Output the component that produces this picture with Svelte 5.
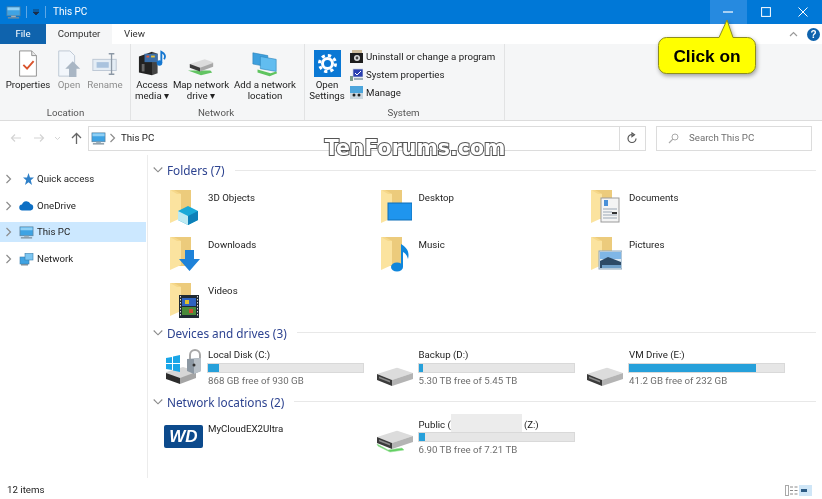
<script>
  const folders = [
    { name: '3D Objects', o: 'cube' }, { name: 'Desktop', o: 'desk' }, { name: 'Documents', o: 'doc' },
    { name: 'Downloads', o: 'down' }, { name: 'Music', o: 'music' }, { name: 'Pictures', o: 'pic' },
    { name: 'Videos', o: 'video' }
  ];
  const drives = [
    { name: 'Local Disk (C:)', free: '868 GB free of 930 GB', pct: 7, icon: 'win' },
    { name: 'Backup (D:)', free: '5.30 TB free of 5.45 TB', pct: 3, icon: 'hdd' },
    { name: 'VM Drive (E:)', free: '41.2 GB free of 232 GB', pct: 82, icon: 'hdd' }
  ];
  const nav = [
    { name: 'Quick access', icon: 'star' }, { name: 'OneDrive', icon: 'cloud' },
    { name: 'This PC', icon: 'pc', sel: true }, { name: 'Network', icon: 'net' }
  ];
</script>

{#snippet chev()}
  <svg class="chev" width="7" height="10" viewBox="0 0 7 10"><path d="M1.500 1l4 4-4 4" fill="none" stroke="#8c8c8c" stroke-width="1.200"/></svg>
{/snippet}
{#snippet down()}
  <svg width="10" height="8" viewBox="0 0 10 8"><path d="M.7 1.500l4.300 4.300 4.300-4.300" fill="none" stroke="#8a8a8a" stroke-width="1.100"/></svg>
{/snippet}
{#snippet pc(w)}
  <svg width={w} height={w} viewBox="0 0 16 16"><rect x="1" y="2" width="14" height="9.500" fill="#3fa3e3" stroke="#5f7f96" stroke-width=".7"/><rect x="1.600" y="2.600" width="12.800" height="3" fill="#8fd0f5"/><rect x="5.500" y="11.500" width="5" height="1.500" fill="#9fb0bb"/><rect x="2" y="13" width="12" height="1.400" fill="#7d8f9c"/></svg>
{/snippet}
{#snippet hdd(green)}
  <svg width="38" height="30" viewBox="0 0 38 30">
    {#if green}<path d="M1 20l11 6 14-2 2 2-14 2-12-6z" fill="#5fcf5f" stroke="#9adf9a" stroke-width=".6"/>{/if}
    <path d="M1 13L20 7q1-.3 2 0l15 5-21 7z" fill="#dcdcdc"/>
    <path d="M1 13l15 6v6L1 19z" fill="#3a3a3a"/>
    <path d="M16 19l21-7v6l-21 7z" fill="#b4b4b4"/>
    <path d="M3 15.500l11 4.300v1.800L3 17.300z" fill="#8a8a8a"/>
  </svg>
{/snippet}

<div class="win">
  <header class="title">
    <div class="qa">
      {@render pc(15)}
      <i class="sep"></i>
      <svg width="8" height="7" viewBox="0 0 8 7"><path d="M1 1h6M1 3l3 3 3-3z" stroke="#1b2d4a" fill="#1b2d4a" stroke-width=".8"/></svg>
      <i class="sep"></i>
      <span>This PC</span>
    </div>
    <div class="wbtns">
      <button class="hot"><svg width="10" height="10" viewBox="0 0 10 10"><path d="M0 5h10" stroke="#fff" stroke-width="1.200"/></svg></button>
      <button><svg width="10" height="10" viewBox="0 0 10 10"><rect x=".6" y=".6" width="8.800" height="8.800" fill="none" stroke="#fff" stroke-width="1"/></svg></button>
      <button><svg width="10" height="10" viewBox="0 0 10 10"><path d="M.5.5l9 9M9.500.5l-9 9" stroke="#fff" stroke-width="1"/></svg></button>
    </div>
  </header>

  <div class="tabs">
    <div class="tab file">File</div>
    <div class="tab cur">Computer</div>
    <div class="tab">View</div>
    <div class="tabr">
      <svg width="9" height="6" viewBox="0 0 9 6"><path d="M1 5l3.500-3.500L8 5" fill="none" stroke="#9a9a9a" stroke-width="1.200"/></svg>
      <span class="help">?</span>
    </div>
  </div>

  <div class="ribbon">
    <section class="grp loc">
      <div class="tools">
        <div class="tool w46">
          <svg width="26" height="30" viewBox="0 0 26 30"><path d="M4 1h13l5 5v22H4z" fill="#fff" stroke="#8d8d8d"/><path d="M17 1v5h5" fill="#e8e8e8" stroke="#8d8d8d"/><path d="M8 16l4 4 7-8" fill="none" stroke="#d9532c" stroke-width="2"/></svg>
          <span>Properties</span>
        </div>
        <div class="tool w34 dim">
          <svg width="28" height="30" viewBox="0 0 28 30"><path d="M3 1h12l5 5v22H3z" fill="#f2f6fb" stroke="#bcc7d4"/><path d="M18 12l8 8h-4v9h-8v-9h-4z" fill="#a9b6c4"/></svg>
          <span>Open</span>
        </div>
        <div class="tool w36 dim">
          <svg width="28" height="30" viewBox="0 0 28 30"><rect x="1" y="10" width="25" height="12" fill="#e4edf5" stroke="#bcc7d4"/><rect x="5" y="13" width="13" height="6" fill="#a9c3de"/><path d="M18 4h6M21 4v22M18 26h6" fill="none" stroke="#8c98a5" stroke-width="1.400"/></svg>
          <span>Rename</span>
        </div>
      </div>
      <footer>Location</footer>
    </section>
    <section class="grp netg">
      <div class="tools">
        <div class="tool w40">
          <svg width="30" height="30" viewBox="0 0 30 30"><path d="M1 7l14-5v25L1 24z" fill="#222"/><path d="M15 2l6 2v21l-6 2z" fill="#444"/><rect x="7" y="4" width="14" height="9" fill="#3a6ea8"/><rect x="9" y="6" width="3" height="2" fill="#e05a3a"/><rect x="14" y="6" width="4" height="2" fill="#e8c33a"/><circle cx="23" cy="14" r="3" fill="#1577d0"/><path d="M25 14V2c4 2 5 5 3 8" fill="none" stroke="#1577d0" stroke-width="2"/><rect x="4" y="15" width="3" height="8" fill="#666"/></svg>
          <span>Access<br/>media ▾</span>
        </div>
        <div class="tool w56">
          <svg width="30" height="30" viewBox="0 0 30 30"><path d="M1 22l14 5 12-3-2-2z" fill="#62c462"/><path d="M3 15l16-5 9 3v4L14 22 3 18z" fill="#dcdcdc"/><path d="M3 15l11 4v4L3 19z" fill="#3a3a3a"/><path d="M14 19l14-5v4l-14 5z" fill="#a8a8a8"/></svg>
          <span>Map network<br/>drive ▾</span>
        </div>
        <div class="tool w62">
          <svg width="30" height="30" viewBox="0 0 30 30"><path d="M2 3l16 3v12L2 15z" fill="#3ea0de" stroke="#2a7fb5" stroke-width=".6"/><path d="M10 7l17 3v13L10 20z" fill="#62bdf0" stroke="#2a7fb5" stroke-width=".6"/><path d="M7 21l14 4 6-2 1 2-8 3-13-4z" fill="#5fc45f"/></svg>
          <span>Add a network<br/>location</span>
        </div>
      </div>
      <footer>Network</footer>
    </section>
    <section class="grp sys">
      <div class="tools">
        <div class="tool w40 settings">
          <svg width="27" height="27" viewBox="0 0 27 27"><rect width="27" height="27" fill="#0a78d4"/><g fill="none" stroke="#fff"><circle cx="13.500" cy="13.500" r="5" stroke-width="3"/><circle cx="13.500" cy="13.500" r="8" stroke-width="3" stroke-dasharray="3.300 3"/></g></svg>
          <span>Open<br/>Settings</span>
        </div>
        <ul class="small">
          <li><svg width="13" height="13" viewBox="0 0 13 13"><rect x="2" y="0" width="10" height="5" fill="#cdbb9b"/><rect y="3" width="13" height="10" fill="#1d1d1d"/><circle cx="7" cy="8" r="3" fill="#ddd"/><circle cx="7" cy="8" r="1.400" fill="#444"/></svg>Uninstall or change a program</li>
          <li><svg width="13" height="13" viewBox="0 0 13 13"><rect x="3" y="1" width="10" height="8" fill="#2a3fb0" stroke="#c8d0dc" stroke-width=".7"/><path d="M5 5l2 2 4-4" stroke="#fff" fill="none"/><rect y="8" width="3" height="5" fill="#7b9c8c"/><rect x="4" y="10" width="9" height="2" fill="#9fb0bb"/></svg>System properties</li>
          <li><svg width="13" height="13" viewBox="0 0 13 13"><rect width="13" height="11" fill="#4da6dc"/><rect y="7" width="13" height="6" fill="#c9d6df"/><circle cx="4" cy="9" r="1.500" fill="#222"/><circle cx="9" cy="9" r="1.500" fill="#222"/></svg>Manage</li>
        </ul>
      </div>
      <footer>System</footer>
    </section>
  </div>

  <div class="addr">
    <div class="arrows">
      <svg width="12" height="10" viewBox="0 0 12 10"><path d="M11 5H1.500M5 1.500L1.500 5 5 8.500" fill="none" stroke="#d4d4d4" stroke-width="1.200"/></svg>
      <svg width="12" height="10" viewBox="0 0 12 10"><path d="M1 5h9.500M7 1.500L10.500 5 7 8.500" fill="none" stroke="#d4d4d4" stroke-width="1.200"/></svg>
      <svg width="7" height="5" viewBox="0 0 7 5"><path d="M1 1l2.500 2.500L6 1" fill="none" stroke="#d4d4d4"/></svg>
      <svg width="11" height="12" viewBox="0 0 11 12"><path d="M5.500 12V1.500M1 6l4.500-4.500L10 6" fill="none" stroke="#666" stroke-width="1.300"/></svg>
    </div>
    <div class="box path">{@render pc(15)}<span class="gt">{@render chev()}</span><span>This PC</span></div>
    <div class="box refresh"><svg width="11" height="12" viewBox="0 0 11 12"><path d="M5 2.500a4 4 0 1 0 4 4M5 1v3.500l2.500-1.800z" fill="none" stroke="#555" stroke-width="1.200"/></svg></div>
    <div class="box search"><svg width="11" height="11" viewBox="0 0 11 11"><circle cx="7" cy="4" r="3" fill="none" stroke="#aaa"/><path d="M4.800 6.200L1 10" stroke="#aaa" stroke-width="1.200"/></svg><span>Search This PC</span></div>
  </div>

  <div class="main">
    <nav>
      {#each nav as n}
        <div class="nrow" class:sel={n.sel}>
          {@render chev()}
          <span class="nic">
            {#if n.icon === 'star'}
              <svg width="13" height="13" viewBox="0 0 13 13"><path d="M7.500 0l1.500 4.500h4L9.800 7.300 11 12 7.500 9.200 4 12l1.200-4.700L2 4.500h4z" fill="#2f80c8"/></svg>
            {:else if n.icon === 'cloud'}
              <svg width="15" height="10" viewBox="0 0 15 10"><path d="M3.500 9.500a3 3 0 0 1-.5-6 4.500 4.500 0 0 1 8.500-.5 3.300 3.300 0 0 1 0 6.500z" fill="#0d6fc4"/></svg>
            {:else if n.icon === 'pc'}
              {@render pc(15)}
            {:else}
              <svg width="15" height="14" viewBox="0 0 15 14"><rect x="1" y="5" width="9" height="7" fill="#3fa3e3" stroke="#3a7fae" stroke-width=".6"/><rect x="6" y="1.500" width="8" height="6.500" fill="#7cc6f2" stroke="#3a7fae" stroke-width=".6"/><rect x="2" y="12" width="7" height="1.500" fill="#7d8f9c"/></svg>
            {/if}
          </span>
          <span>{n.name}</span>
        </div>
      {/each}
    </nav>

    <div class="content">
      <div class="hd">{@render down()}<h2>Folders (7)</h2><i></i></div>
      <div class="grid fgrid">
        {#each folders as f}
          <div class="folder">
            <svg width="32" height="36" viewBox="0 0 32 36">
              <path d="M5 1h17v29H5z" fill="#eccb7c"/>
              <path d="M1 1l11 4v24L1 34z" fill="#fbe39f"/>
              <path d="M1 1l4 0 7 4H8z" fill="#f6d88a"/>
              {#if f.o === 'cube'}
                <path d="M9 22l10-5 10 5v9l-10 5-10-5z" fill="#19a9d8"/><path d="M9 22l10 5v9l-10-5z" fill="#bdeaf2"/><path d="M19 27l10-5v9l-10 5z" fill="#0d7fb8"/>
              {:else if f.o === 'desk'}
                <rect x="8" y="14" width="24" height="17" fill="#1f95ee" stroke="#0f6fb8"/>
              {:else if f.o === 'doc'}
                <rect x="11" y="9" width="18" height="24" fill="#f4f4f4" stroke="#9b9b9b"/><path d="M14 11l4 0v6h-4z" fill="#4a90d8"/><path d="M13 20h14M13 23h9M13 26h14M13 29h14" stroke="#9aa7b5"/><path d="M22 23h5v2h-5z" fill="#333"/>
              {:else if f.o === 'down'}
                <path d="M16 14h9v9h6L20.500 35 10 23h6z" fill="#1e82d8"/>
              {:else if f.o === 'music'}
                <ellipse cx="17" cy="31" rx="6" ry="4.500" fill="#0f86dc"/><path d="M21 31V8c5 3 9 7 7 15-1-4-3-6-5-7v15z" fill="#0f86dc"/>
              {:else if f.o === 'pic'}
                <rect x="9" y="15" width="23" height="18" fill="#dbe8f2" stroke="#8fa8bc"/><rect x="10" y="16" width="21" height="7" fill="#7fb6e6"/><path d="M10 25l8-4 13 5v6H10z" fill="#2d4a66"/><path d="M12 29h19v3H12z" fill="#6f9fc8"/>
              {:else}
                <rect x="10" y="13" width="20" height="23" fill="#1f2a33"/><rect x="13" y="16" width="14" height="8" fill="#2f63c0"/><rect x="13" y="25" width="14" height="8" fill="#4a8a3a"/><rect x="16" y="18" width="4" height="4" fill="#e0c030"/><rect x="20" y="27" width="4" height="4" fill="#d04a30"/><path d="M11.500 14v21M28.500 14v21" stroke="#ddd" stroke-dasharray="1.500 1.500"/>
              {/if}
            </svg>
            <span>{f.name}</span>
          </div>
        {/each}
      </div>

      <div class="hd">{@render down()}<h2>Devices and drives (3)</h2><i></i></div>
      <div class="grid dgrid">
        {#each drives as d}
          <div class="drive">
            <div class="dic">
              {#if d.icon === 'win'}
                <svg width="38" height="38" viewBox="0 0 38 38">
                  <path d="M1 24l17-5 13 4v3L15 33 1 28z" fill="#d6d6d6"/><path d="M1 25l14 5v6L1 31z" fill="#2c2c2c"/><path d="M15 30l16-6v6l-16 6z" fill="#a5a5a5"/>
                  <path d="M1 10l6-1v6H1zM8 8.500l7-1.500v8H8zM1 16h6v6l-6-1zM8 16h7v8l-7-1.500z" fill="#19a6e8"/>
                  <path d="M25 11V7a5 5 0 0 1 10 0v4" fill="none" stroke="#a8a8a8" stroke-width="2"/><path d="M22 11l14-1v13l-7 3-7-3z" fill="#8c98a3"/><path d="M29 10.500l7-.5v13l-7 3z" fill="#b8c0c7"/><circle cx="29" cy="17" r="1.500" fill="#333"/>
                </svg>
              {:else}
                {@render hdd(false)}
              {/if}
            </div>
            <div class="dtx">
              <div class="nm">{d.name}</div>
              <div class="bar"><b style="width:{d.pct}%"></b></div>
              <div class="fr">{d.free}</div>
            </div>
          </div>
        {/each}
      </div>

      <div class="hd">{@render down()}<h2>Network locations (2)</h2><i></i></div>
      <div class="grid ngrid">
        <div class="drive wd">
          <div class="dic">
            <svg width="39" height="23" viewBox="0 0 39 23"><rect width="39" height="23" rx="2" fill="#0c4a8c"/></svg>
            <span class="wdt">WD</span>
          </div>
          <div class="dtx"><div class="nm">MyCloudEX2Ultra</div></div>
        </div>
        <div class="drive">
          <div class="dic">{@render hdd(true)}</div>
          <div class="dtx">
            <div class="nm">Public (<span class="redact"></span>(Z:)</div>
            <div class="bar"><b style="width:4%"></b></div>
            <div class="fr">6.90 TB free of 7.21 TB</div>
          </div>
        </div>
      </div>
    </div>
  </div>

  <footer class="status">
    <span>12 items</span>
    <div class="views">
      <svg width="13" height="11" viewBox="0 0 13 11"><rect x=".5" y=".5" width="3" height="10" fill="none" stroke="#a9a9a9"/><path d="M5 2h3M9.500 2h3M5 5.500h3M9.500 5.500h3M5 9h3M9.500 9h3" stroke="#8a8a8a"/></svg>
      <svg width="13" height="11" viewBox="0 0 13 11"><rect width="13" height="11" fill="#cfe6f7"/><rect x="2" y="4" width="6" height="3" fill="#2b5b85"/></svg>
    </div>
  </footer>

  <div class="mark">TenForums.com</div>
  <svg class="callout" width="104" height="66" viewBox="0 0 104 66">
    <path d="M11.500 18.500H64L72 1l6 17.500h14.500a8 8 0 0 1 8 8v20a8 8 0 0 1-8 8H11.500a8 8 0 0 1-8-8v-20a8 8 0 0 1 8-8z" fill="#ffff00" stroke="#8d8d1e"/>
  </svg>
  <div class="cotxt">Click on</div>
</div>

<style>
  :global(body) { margin: 0; background: #fff; }
  .win {
    position: relative; width: 822px; height: 499px; overflow: hidden; background: #fff;
    font: 9.700px/12px Roboto, "Noto Sans", sans-serif; color: #222;
    display: flex; flex-direction: column; filter: blur(.3px);
  }
  svg { display: block; flex: none; }
  .title { height: 24px; background: #0078d7; display: flex; justify-content: space-between; color: #fff; flex: none; }
  .qa { display: flex; align-items: center; padding-left: 6px; gap: 5px; font-size: 10px; }
  .qa span { margin-left: 2px; }
  .sep { width: 1px; height: 12px; background: #5fa8e6; }
  .wbtns { display: flex; }
  .wbtns button { width: 37.500px; border: 0; padding: 0; background: none; display: flex; align-items: center; justify-content: center; }
  .wbtns .hot { background: #268ae0; }
  .tabs { height: 20px; display: flex; flex: none; background: #fff; align-items: stretch; line-height: 20px; }
  .tab { padding: 0 12px; color: #333; }
  .tab.file { width: 46px; box-sizing: border-box; text-align: center; padding: 0; background: #0f63ad; color: #fff; }
  .tab.cur { width: 66px; box-sizing: border-box; text-align: center; padding: 0; background: #f5f6f7; }
  .tabr { margin-left: auto; display: flex; align-items: center; gap: 9px; padding-right: 2px; }
  .help { width: 13px; height: 13px; border-radius: 50%; background: #0f63ad; color: #fff; font: bold 10px/13px "Liberation Sans", sans-serif; text-align: center; }
  .ribbon { height: 76px; flex: none; background: #f5f6f7; border-bottom: 1px solid #dcdcdc; display: flex; }
  .grp { display: flex; flex-direction: column; border-right: 1px solid #e2e3e4; box-sizing: border-box; }
  .grp.loc { width: 131px; padding-left: 5px; }
  .grp.netg { width: 174px; padding-left: 1px; }
  .grp.sys { width: 200px; padding-left: 2px; }
  .tools { display: flex; height: 56px; flex: none; }
  .grp > footer { height: 19px; text-align: center; line-height: 25px; color: #555; padding-right: 4px; }
  .tool { display: flex; flex-direction: column; align-items: center; text-align: center; padding-top: 6px; box-sizing: border-box; line-height: 11px; }
  .tool svg { height: 28px; margin-bottom: 1px; }
  .tool span { white-space: nowrap; }
  .w46 { width: 46px; } .w34 { width: 36px; } .w36 { width: 36px; } .w40 { width: 40px; } .w56 { width: 58px; } .w62 { width: 70px; }
  .dim { color: #8d8d8d; }
  .settings svg { height: 27px; margin-bottom: 2px; }
  .small { list-style: none; margin: 6px 0 0 3px; padding: 0; display: flex; flex-direction: column; gap: 5px; }
  .small li { height: 13px; display: flex; align-items: center; gap: 3px; white-space: nowrap; line-height: 13px; }
  .addr { height: 34px; flex: none; display: flex; align-items: center; background: #fff; }
  .arrows { width: 88px; flex: none; box-sizing: border-box; display: flex; align-items: center; padding-left: 10px; gap: 11px; }
  .arrows svg:nth-child(3) { margin-left: -2px; margin-right: -1px; }
  .box { height: 25px; border: 1px solid #dcdcdc; box-sizing: border-box; display: flex; align-items: center; }
  .path { width: 532px; padding-left: 2px; gap: 1px; }
  .gt { margin: 0 4px 0 2px; }
  .refresh { width: 26px; margin-left: 0; justify-content: center; border-left: 0; }
  .search { width: 156px; margin-left: 10px; padding-left: 11px; gap: 10px; color: #6f6f6f; }
  .main { flex: 1; display: flex; min-height: 0; }
  nav { width: 148px; height: 325px; flex: none; border-right: 1px solid #ececec; padding-top: 14px; box-sizing: border-box; display: flex; flex-direction: column; gap: 6.500px; }
  .nrow { width: 146px; height: 20px; flex: none; display: flex; align-items: center; padding-left: 5px; box-sizing: border-box; }
  .nrow.sel { background: #cce8ff; }
  .nic { width: 25px; display: flex; justify-content: flex-end; padding-right: 3px; box-sizing: border-box; }
  .content { flex: 1; padding: 8px 6px 0 5px; }
  .hd { height: 16px; display: flex; align-items: center; gap: 4px; margin: -1px 0 6px; }
  .hd h2 { margin: 0; font: 400 11.800px/16px "Noto Sans", sans-serif; color: #2d4390; white-space: nowrap; }
  .hd i { flex: 1; height: 1px; background: #e8e8e8; margin-left: 6px; }
  .grid { display: grid; grid-template-columns: repeat(3, 210.500px); }
  .fgrid { padding-left: 16px; grid-auto-rows: 46.500px; margin-bottom: 2px; }
  .folder { display: flex; gap: 7px; padding-top: 5px; box-sizing: border-box; }
  .folder span { margin-top: 3px; }
  .dgrid { padding-left: 12px; height: 45px; margin-bottom: 3px; }
  .ngrid { padding-left: 11px; height: 48px; }
  .drive { display: flex; gap: 4px; }
  .dic { width: 38px; position: relative; flex: none; padding-top: 14px; }
  .dgrid .drive:first-child .dic { padding-top: 1px; }
  .ngrid .dic { padding-top: 8px; }
  .wd .dic { padding-top: 9px; width: 39px; }
  .ngrid .drive:nth-child(2) { padding-left: 1px; }
  .wdt { position: absolute; left: 4px; top: 10px; width: 31px; text-align: center; color: #fff; font: italic 900 17px/21px "Liberation Sans", sans-serif; }
  .dtx { width: 157px; padding-top: 2px; }
  .wd .dtx { padding-top: 7px; }
  .nm { height: 12px; color: #222; white-space: nowrap; padding-left: 1px; }
  .bar { height: 10px; margin-top: 2px; background: #e6e6e6; border: 1px solid #d9d9d9; box-sizing: border-box; }
  .bar b { display: block; height: 100%; background: #26a0da; }
  .fr { color: #6d6d6d; margin-top: 2px; white-space: nowrap; padding-left: 1px; }
  .redact { display: inline-block; width: 71px; height: 18px; background: #ececec; vertical-align: middle; margin: -4px 2px 0 0; }
  .status { height: 21px; flex: none; display: flex; justify-content: space-between; align-items: center; padding: 3px 10px 0 7px; box-sizing: border-box; position: absolute; left: 0; right: 0; bottom: 0; background: #fff; }
  .views { display: flex; gap: 1px; }
  .mark {
    position: absolute; left: 315px; top: 137px; width: 200px; text-align: center; font: bold 20.500px/22px "DejaVu Sans", sans-serif;
    color: #fff; -webkit-text-stroke: 2px #555; paint-order: stroke fill; white-space: nowrap;
  }
  .callout { position: absolute; left: 655px; top: 19px; filter: drop-shadow(1px 2px 2px rgba(0,0,0,.35)); }
  .cotxt { position: absolute; left: 658px; top: 45px; width: 98px; text-align: center; font: bold 17.300px/22px "Liberation Sans", sans-serif; color: #000; }
</style>
